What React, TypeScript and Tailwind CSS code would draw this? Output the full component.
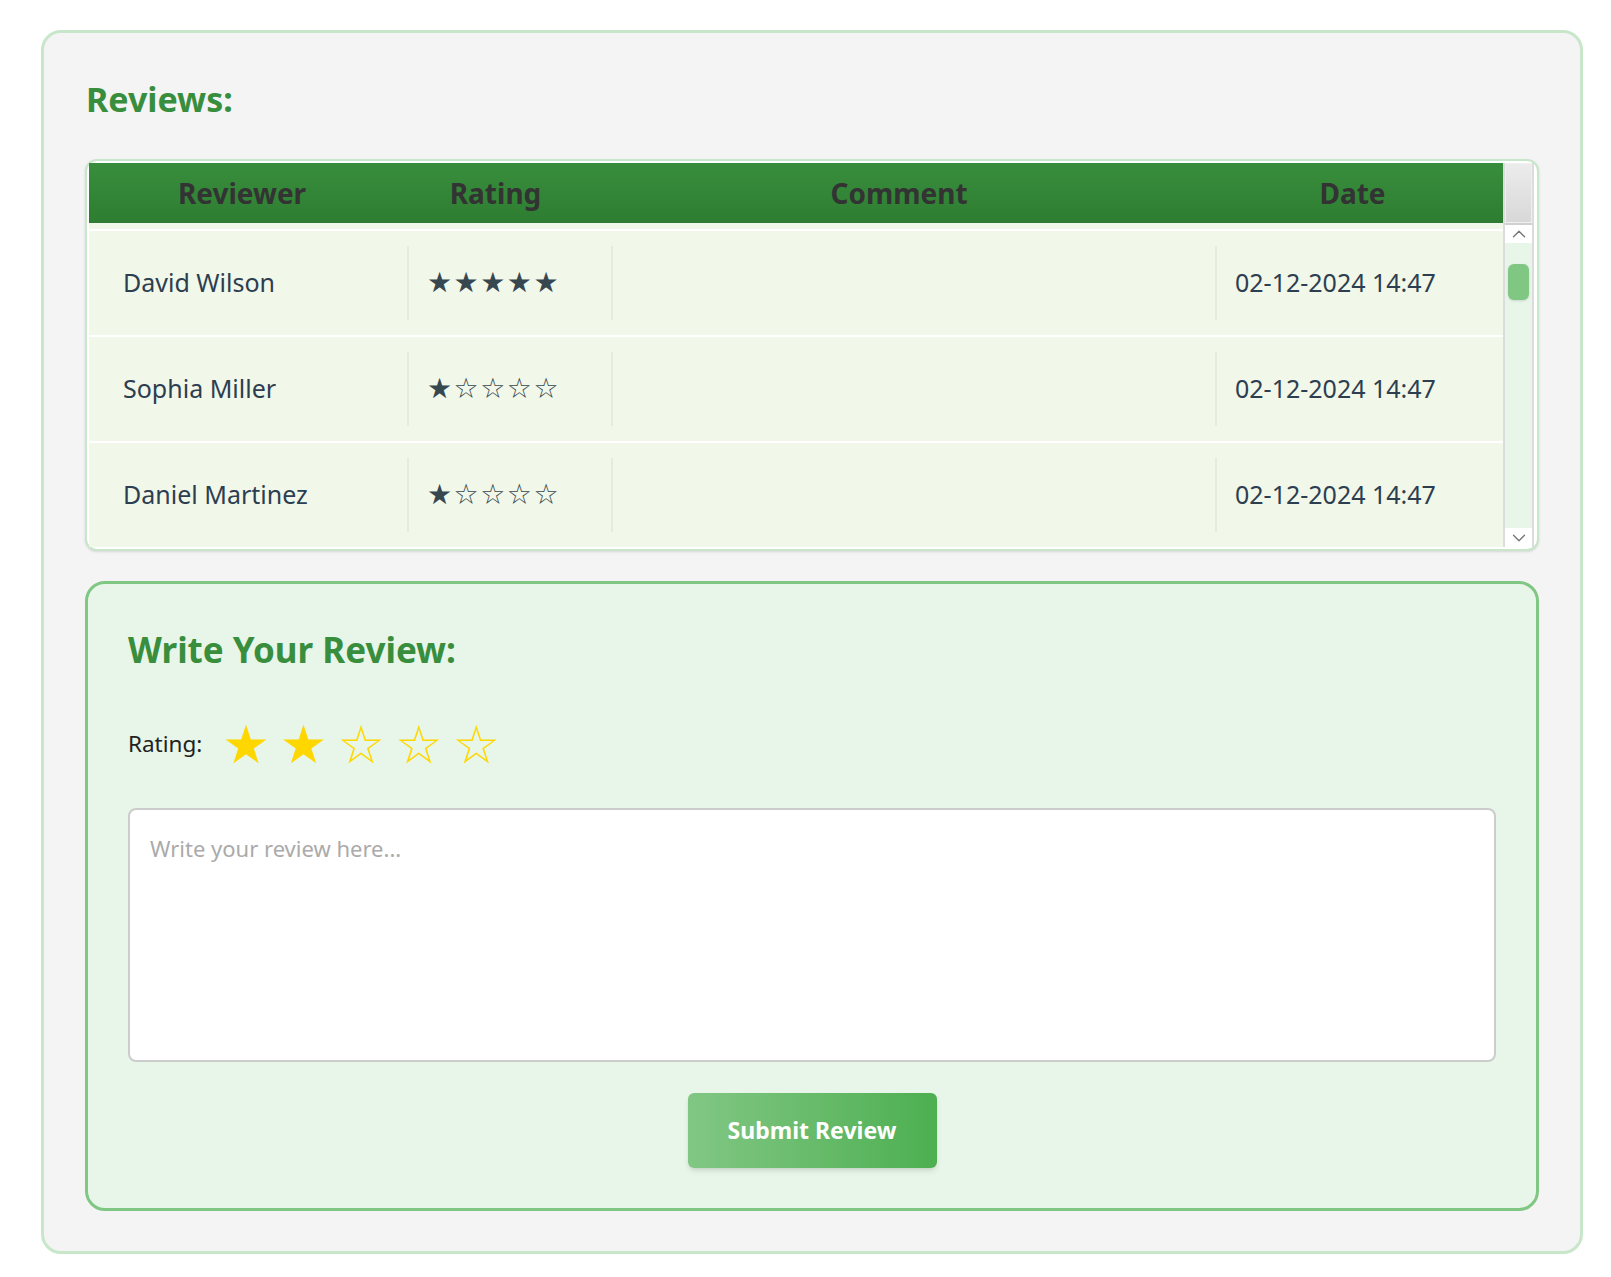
import { ChevronUp, ChevronDown } from "lucide-react";

type Review = { name: string; rating: number; comment: string; date: string };

const reviews: Review[] = [
    { name: "David Wilson", rating: 5, comment: "", date: "02-12-2024 14:47" },
    { name: "Sophia Miller", rating: 1, comment: "", date: "02-12-2024 14:47" },
    { name: "Daniel Martinez", rating: 1, comment: "", date: "02-12-2024 14:47" },
];

const font = "font-['Noto_Sans','Open_Sans',sans-serif]";

function Stars({ value }: { value: number }) {
    return (
        <span className="font-['DejaVu_Sans',sans-serif] text-[28px] tracking-[1.5px] text-[#37474f]">
            {[1, 2, 3, 4, 5].map((i) => (i <= value ? "★" : "☆")).join("")}
        </span>
    );
}

function Divider() {
    return <div className="w-[2px] h-[74px] bg-[#e6ebe0] shrink-0" />;
}

export default function App() {
    const selected = 2;

    return (
        <div className={`min-h-screen bg-white pt-[30px] pl-[41px] ${font}`}>
            <div className="w-[1542px] rounded-[20px] border-[3px] border-[#c8e6c9] bg-[#f4f4f4] px-[41px] pt-[44px] pb-[40px]">
                <h2 className="text-[34px] leading-[44px] font-bold text-[#388e3c] ml-[1px]">Reviews:</h2>

                {/* table */}
                <div className="mt-[38px] flex rounded-[12px] border-2 border-[#c8e6c9] bg-white p-[2px] pr-[3px] shadow-sm">
                    <div className="flex-1 flex flex-col">
                        <div className="h-[60px] flex items-center bg-gradient-to-b from-[#388e3c] to-[#2e7d32] text-[#333] text-[28px] font-bold">
                            <div className="w-[306px] text-center">Reviewer</div>
                            <div className="w-[201px] text-center">Rating</div>
                            <div className="w-[606px] text-center">Comment</div>
                            <div className="flex-1 text-center">Date</div>
                        </div>
                        <div className="h-[6px] bg-[#f1f7e9]" />
                        <div className="flex flex-col gap-[2px] pt-[2px] bg-white">
                            {reviews.map((r, index) => (
                                <div key={index} className="h-[104px] flex items-center bg-[#f1f7e9] text-[#2c3e50] text-[25px]">
                                    <div className="w-[318px] pl-[34px]">{r.name}</div>
                                    <Divider />
                                    <div className="w-[202px] pl-[18px]"><Stars value={r.rating} /></div>
                                    <Divider />
                                    <div className="w-[602px] px-5">{r.comment}</div>
                                    <Divider />
                                    <div className="flex-1 pl-[18px]">{r.date}</div>
                                </div>
                            ))}
                        </div>
                    </div>
                    {/* scrollbar */}
                    <div className="w-[31px] flex flex-col border-l-2 border-r-2 border-[#dcdcdc]">
                        <div className="h-[60px] bg-gradient-to-b from-[#ececec] to-[#d8d8d8] border border-[#f0f0f0]" />
                        <div className="h-[2px] bg-[#d0d0d0]" />
                        <div className="h-[18px] bg-white flex items-center justify-center text-[#777]">
                            <ChevronUp size={22} strokeWidth={1.5} />
                        </div>
                        <div className="flex-1 bg-[#e8f5e9] px-[3px] pt-[21px]">
                            <div className="h-[36px] rounded-[6px] bg-[#81c784] shadow-sm" />
                        </div>
                        <div className="h-[19px] bg-white flex items-center justify-center text-[#777]">
                            <ChevronDown size={22} strokeWidth={1.5} />
                        </div>
                    </div>
                </div>

                {/* write review */}
                <div className="mt-[30px] rounded-[20px] border-[3px] border-[#81c784] bg-[#e8f5e9] px-[40px] pt-[46px] pb-[40px]">
                    <h3 className="text-[35px] leading-[40px] font-bold text-[#388e3c]">Write Your Review:</h3>
                    <div className="mt-[49px] flex items-center h-[50px]">
                        <span className="text-[22.5px] text-[#222] mr-[20px]">Rating:</span>
                        <div className="flex gap-[10px] font-['DejaVu_Sans',sans-serif] text-[53px] leading-none text-[#ffd700]">
                            {[1, 2, 3, 4, 5].map((i) => (
                                <span key={i}>{i <= selected ? "★" : "☆"}</span>
                            ))}
                        </div>
                    </div>
                    <textarea
                        className="mt-[39px] block w-full h-[254px] rounded-[8px] border-2 border-[#cccccc] bg-white px-[20px] pt-[22px] text-[22px] text-[#333] placeholder-[#aaa] outline-none resize-none"
                        placeholder="Write your review here..."
                    />
                    <div className="flex justify-center mt-[31px]">
                        <button className="w-[249px] h-[75px] rounded-[6px] bg-gradient-to-r from-[#81c784] to-[#4caf50] text-white text-[23px] font-bold shadow-md">
                            Submit Review
                        </button>
                    </div>
                </div>
            </div>
        </div>
    );
}
